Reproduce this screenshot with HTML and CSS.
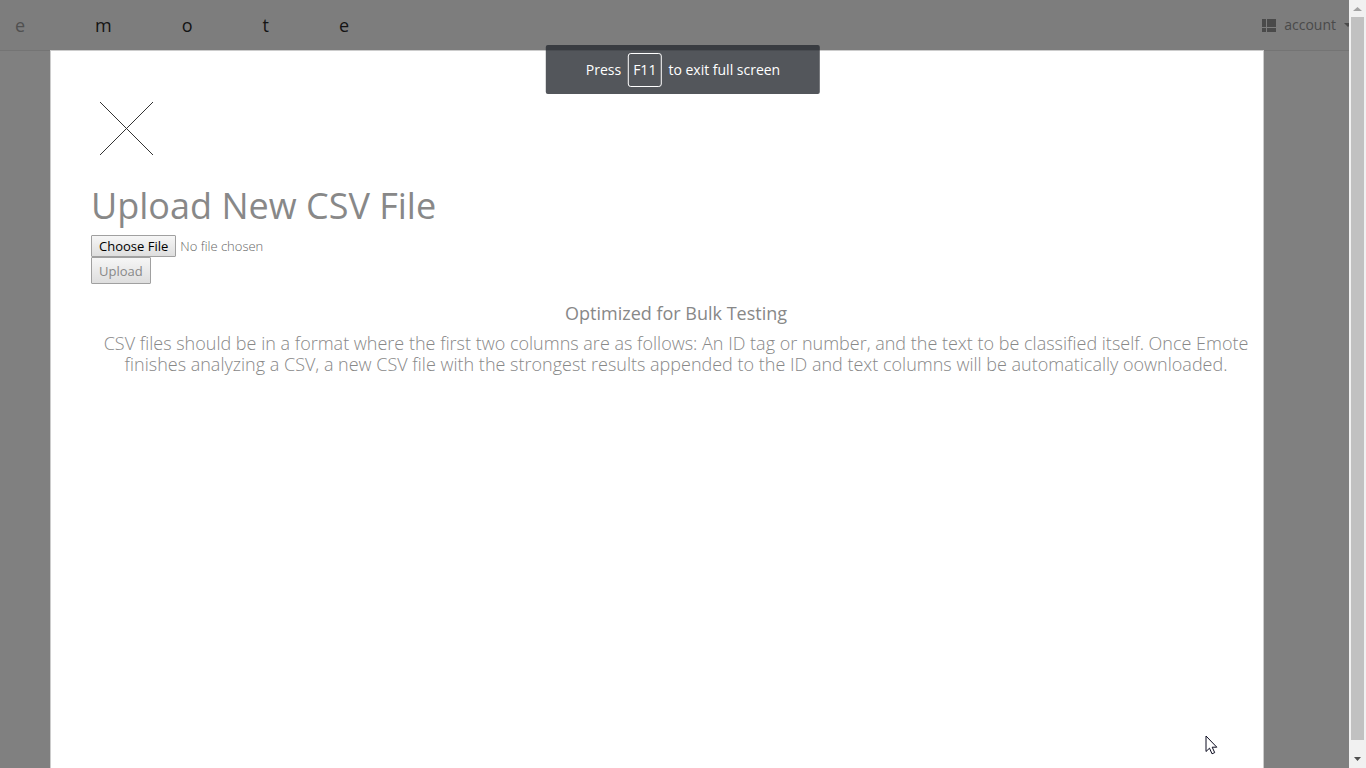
FILE: index.html
```html
<!DOCTYPE html>
<html lang="en">
<head>
<meta charset="utf-8">
<title>emote</title>
<link rel="stylesheet" href="styles.css">
</head>
<body>
<div class="page">
  <header class="navbar">
    <nav class="brand">
      <a class="brand-first" href="#">e</a><a href="#">m</a><a href="#">o</a><a href="#">t</a><a href="#">e</a>
    </nav>
    <a class="account" href="#">
      <svg class="grid-icon" width="14" height="13" viewBox="0 0 14 13"><path d="M0 0h4v8H0zM5 0h9v8H5zM0 9h4v4H0zM5 9h9v4H5z" fill="currentColor"/></svg>
      <span>account</span>
      <svg width="8" height="4" viewBox="0 0 8 4"><path d="M0 0h8L4 4z" fill="currentColor"/></svg>
    </a>
  </header>
  <main class="modal">
    <button class="close" type="button" aria-label="Close">
      <svg width="55" height="55" viewBox="0 0 55 55"><path d="M1 1l53 53M54 1L1 54" stroke="#333" stroke-width="1" fill="none"/></svg>
    </button>
    <h1>Upload New CSV File</h1>
    <form class="upload">
      <input class="file" type="file" aria-label="CSV file">
      <button class="submit" type="button">Upload</button>
    </form>
    <section class="info">
      <h2>Optimized for Bulk Testing</h2>
      <p>CSV files should be in a format where the first two columns are as follows: An ID tag or number, and the text to be classified itself. Once Emote finishes analyzing a CSV, a new CSV file with the strongest results appended to the ID and text columns will be automatically oownloaded.</p>
    </section>
  </main>
</div>
<div class="scrollbar">
  <svg width="17" height="17" viewBox="0 0 17 17"><path d="M4 11h9L8.500 7z" fill="#a3a3a3"/></svg>
  <div class="thumb"></div>
  <svg width="17" height="17" viewBox="0 0 17 17"><path d="M5 6h7L8.500 10z" fill="#505050"/></svg>
</div>
<div class="toast"><span>Press</span><kbd>F11</kbd><span>to exit full screen</span></div>
<svg class="cursor" width="13" height="20" viewBox="0 0 13 20"><path d="M1 1v15.500l3.500-3.300 2.500 5.600 2.700-1.200-2.500-5.400h4.600z" fill="#fff" stroke="#0c0c20" stroke-width="1"/></svg>
</body>
</html>
```

FILE: styles.css
```css
* { box-sizing: border-box; }
body {
  margin: 0;
  height: 100vh;
  display: flex;
  overflow: hidden;
  background: #808080;
  color: #888;
  font-family: "Open Sans", sans-serif;
}
h1, h2, p { margin: 0; }
a { color: inherit; text-decoration: none; }
.page {
  flex: 1;
  min-width: 0;
  display: flex;
  flex-direction: column;
  overflow: hidden;
}
.navbar {
  height: 50px;
  flex: none;
  display: flex;
  justify-content: space-between;
  align-items: center;
  padding-left: 15px;
  background: #7d7d7d;
  box-shadow: 0 1px #747474;
}
.brand {
  display: flex;
  gap: 70px;
  font-size: 18px;
  line-height: 20px;
  color: #141414;
}
.brand-first { color: #505050; }
.account {
  display: flex;
  align-items: center;
  gap: 8px;
  flex: none;
  margin-right: -3px;
  font-size: 14px;
  line-height: 20px;
  color: #4a4a4a;
}
.modal {
  position: relative;
  flex: 1;
  width: 90%;
  margin-left: 50px;
  padding: 50px 2px 0 40px;
  background: #fff;
  border: 1px solid #ccc;
  border-bottom: 0;
}
.close {
  display: block;
  margin-left: 8px;
  padding: 0;
  border: 0;
  background: none;
}
.close svg { display: block; }
h1 {
  margin-top: 30px;
  font-size: 36px;
  line-height: 40px;
  font-weight: 400;
}
.upload {
  display: flex;
  flex-direction: column;
  align-items: flex-start;
  margin-top: 9px;
}
.file {
  font: 300 13px/18px "Open Sans", sans-serif;
  color: #666;
}
.file::file-selector-button {
  height: 22px;
  margin: 0 4px 0 0;
  padding: 0 7px;
  border: 1px solid #a0a0a0;
  border-radius: 1px;
  background: linear-gradient(#f6f6f6, #dedede);
  font: 400 13px/18px "Open Sans", sans-serif;
  color: #000;
}
.submit {
  height: 27px;
  padding: 0 7px;
  border: 1px solid #a0a0a0;
  border-radius: 1px;
  background: linear-gradient(#f6f6f6, #dedede);
  font: 400 13px/18px "Open Sans", sans-serif;
  color: #888;
}
.info {
  margin-top: 19px;
  text-align: center;
}
h2 {
  font-size: 18px;
  line-height: 20px;
  font-weight: 400;
}
.info p {
  margin-top: 10px;
  font-size: 18px;
  line-height: 21px;
  font-weight: 300;
}
.scrollbar {
  flex: none;
  width: 17px;
  display: flex;
  flex-direction: column;
  background: #f1f1f1;
}
.scrollbar svg { flex: none; }
.thumb {
  flex: 1;
  margin: 0 2px 11px;
  background: #c1c1c1;
}
.toast {
  position: absolute;
  top: 45px;
  left: 50%;
  transform: translateX(-50%);
  display: flex;
  align-items: center;
  gap: 7px;
  height: 49px;
  padding: 0 40px;
  border-radius: 2px;
  background: rgba(40, 44, 50, 0.8);
  color: #fff;
  font-size: 14px;
  line-height: 20px;
  white-space: nowrap;
}
.toast kbd {
  padding: 6px 4px;
  border: 1px solid #fff;
  border-radius: 3px;
  font: inherit;
}
.cursor {
  position: absolute;
  left: 1205px;
  top: 735px;
}
```
